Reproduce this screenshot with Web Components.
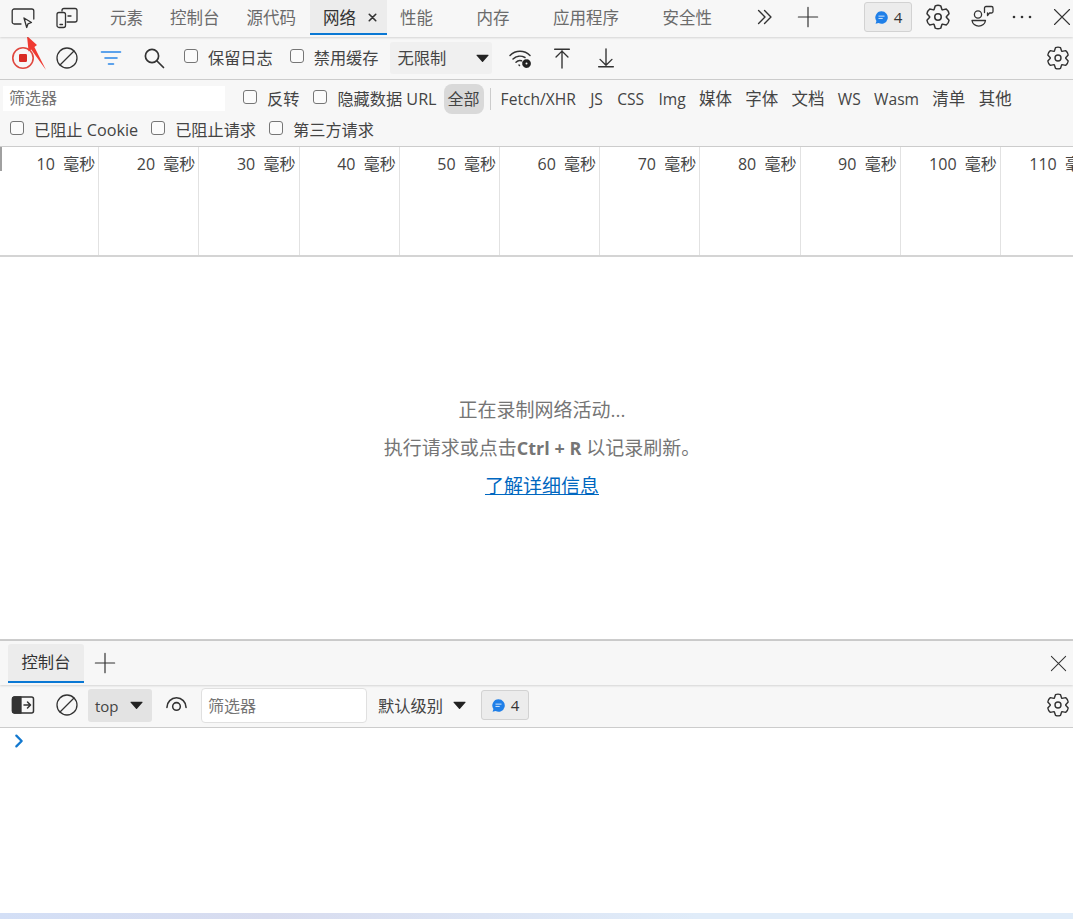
<!DOCTYPE html>
<html lang="zh-CN">
<head>
<meta charset="UTF-8">
<title>DevTools 网络</title>
<style>
  html, body { margin: 0; height: 100%; background: #fff; overflow: hidden; }
  body { font: 16px/20px "Open Sans", "Noto Sans CJK SC", sans-serif; color: #444; }
</style>
</head>
<body>
<devtools-app>
  <main-tabbar>
    <dt-iconbtn slot="start" name="inspect"></dt-iconbtn>
    <dt-iconbtn slot="start" name="device"></dt-iconbtn>
    <dt-tab>元素</dt-tab>
    <dt-tab>控制台</dt-tab>
    <dt-tab>源代码</dt-tab>
    <dt-tab active closable>网络</dt-tab>
    <dt-tab spare>性能</dt-tab>
    <dt-tab spare>内存</dt-tab>
    <dt-tab spare>应用程序</dt-tab>
    <dt-tab spare>安全性</dt-tab>
  </main-tabbar>
  <net-toolbar></net-toolbar>
  <net-filters></net-filters>
  <net-timeline></net-timeline>
  <net-empty></net-empty>
  <drawer-panel></drawer-panel>
  <svg slot="over" width="30" height="40" viewBox="0 0 30 40" style="position:absolute;left:22px;top:32px;pointer-events:none">
    <path d="M5 4 15 13 12.4 15 24 38 9.2 17.6 6.6 19.4Z" fill="#f03a32"/>
  </svg>
</devtools-app>

<script>
  // gear outline with 6 lobes, shared by the three settings icons
  function gearPath() {
    let d = '';
    for (let k = 0; k < 6; k++) {
      const c = (-90 + 60 * k) * Math.PI / 180;
      const pt = (r, a) => (12 + r * Math.cos(c + a)).toFixed(2) + ' ' + (12 + r * Math.sin(c + a)).toFixed(2);
      d += (k ? 'L' : 'M') + pt(7.7, -0.5) + 'L' + pt(10.6, -0.24) + 'Q' + pt(11.4, 0) + ' ' + pt(10.6, 0.24) + 'L' + pt(7.7, 0.5);
    }
    return d + 'Z';
  }

  const ICONS = {
    inspect: '<path d="M10 19H3.2a2 2 0 0 1-2-2V6a2 2 0 0 1 2-2h17.6a2 2 0 0 1 2 2v8"/><path d="M13 13l7.500 4.500-3.500 1.300-1.300 3.700z"/>',
    device: '<path d="M7 6V5.500a2 2 0 0 1 2-2h11a2 2 0 0 1 2 2v9.500a2 2 0 0 1-2 2h-8"/><rect x="2" y="7.500" width="8.500" height="15" rx="2"/><path d="M5 19.500h2.500M13 11h3"/>',
    clear: '<circle cx="12" cy="12" r="10"/><path d="M5 19 19 5"/>',
    record: '<circle cx="12" cy="12" r="10.2" stroke="#e0473e" stroke-width="1.6"/><rect x="8" y="8" width="8" height="8" rx="1.2" fill="#d92c25" stroke="none"/>',
    filter: '<path d="M2.5 6h19M6 12h12M9.5 18h5" stroke="#2a86e8" stroke-width="1.6"/>',
    search: '<circle cx="10" cy="10" r="6.6" stroke-width="1.7"/><path d="M15 15l6.5 6.5" stroke-width="1.7"/>',
    wifi: '<path d="M2 9.500a14 14 0 0 1 20 0M5 13a10 10 0 0 1 12-1.500M8 16.300a5.500 5.500 0 0 1 5.500-1.500M11 19l.5.500" stroke-width="1.500"/><circle cx="18.500" cy="17.500" r="3.400" fill="#222" stroke="#222" stroke-dasharray="1.600 1.100" stroke-width="2"/><circle cx="18.500" cy="17.500" r="1" fill="#f7f7f7" stroke="none"/>',
    up: '<path d="M4 2.500h16M12 23V4M5.500 11 12 4.500 18.500 11" stroke-width="1.500"/>',
    down: '<path d="M4 21.500h16M12 2v18M5.500 13.500 12 20l6.500-6.500" stroke-width="1.500"/>',
    chevrons: '<path d="M5 5l7 7-7 7M11.500 5l7 7-7 7" stroke-width="1.500"/>',
    plus: '<path d="M12 1.500v21M1.500 12h21" stroke-width="1.300"/>',
    gear: '<path d="' + gearPath() + '" stroke-width="1.400" stroke-linejoin="round"/><circle cx="12" cy="12" r="3" stroke-width="1.400"/>',
    people: '<circle cx="8" cy="9.500" r="3.600"/><path d="M2 15.500h13.500a6.800 6.500 0 0 1-13.500 0z"/><path d="M14.500 7.500V3A1.500 1.500 0 0 1 16 1.500h5.500A1.500 1.500 0 0 1 23 3v3.500A1.500 1.500 0 0 1 21.500 8h-2l-2 2.500V8"/>',
    dots: '<circle cx="4" cy="12" r="1.300" fill="#333" stroke="none"/><circle cx="12" cy="12" r="1.300" fill="#333" stroke="none"/><circle cx="20" cy="12" r="1.300" fill="#333" stroke="none"/>',
    close: '<path d="M3 3l18 18M21 3 3 21" stroke-width="1.300"/>',
    tabclose: '<path d="M6 6l12 12M18 6 6 18" stroke-width="3"/>',
    dock: '<rect x="1.500" y="4" width="21" height="16" rx="2" stroke-width="1.500"/><path d="M1.500 6a2 2 0 0 1 2-2H10v16H3.500a2 2 0 0 1-2-2z" fill="#333"/><path d="M13 12h6M16.500 9l3 3-3 3" stroke-width="1.500"/>',
    eye: '<path d="M2 14a10 10 0 0 1 20 0" stroke-width="1.600"/><circle cx="12" cy="13" r="4" stroke-width="1.600"/>',
    caret: '<path d="M3 6h18a.800.800 0 0 1 .600 1.300l-8.800 10a1 1 0 0 1-1.500 0l-8.800-10A.800.800 0 0 1 3 6z" fill="#222" stroke="none"/>',
    prompt: '<path d="M8 4l8 8-8 8" stroke="#1278cf" stroke-width="3.400"/>',
    chat: '<path d="M12 2a10 10 0 1 1-4.700 18.800L2.500 22l1.400-4.300A10 10 0 0 1 12 2z" fill="#1f7fe8" stroke="none"/><path d="M7.800 9.800h8.400M7.800 13.500h5.500" stroke="#cfe4fb" stroke-width="1.600"/>'
  };

  class DtIcon extends HTMLElement {
    connectedCallback() {
      const size = this.getAttribute('size') || 24;
      this.attachShadow({ mode: 'open' }).innerHTML = `
        <style>
          :host { display: inline-flex; flex: none; width: ${size}px; height: ${size}px; }
          svg { display: block; width: 100%; height: 100%; fill: none; stroke: #333; stroke-width: 1.3; stroke-linecap: round; stroke-linejoin: round; }
        </style>
        <svg viewBox="0 0 24 24">${ICONS[this.getAttribute('name')] || ''}</svg>`;
    }
  }
  customElements.define('dt-icon', DtIcon);

  class DtIconBtn extends HTMLElement {
    connectedCallback() {
      const size = this.getAttribute('size') || 24;
      const w = this.getAttribute('w') || 44;
      this.attachShadow({ mode: 'open' }).innerHTML = `
        <style>
          :host { display: inline-flex; flex: none; width: ${w}px; height: 100%; align-items: center; justify-content: center; }
        </style>
        <dt-icon name="${this.getAttribute('name')}" size="${size}"></dt-icon>`;
    }
  }
  customElements.define('dt-iconbtn', DtIconBtn);

  class DtTab extends HTMLElement {
    connectedCallback() {
      const closable = this.hasAttribute('closable');
      this.attachShadow({ mode: 'open' }).innerHTML = `
        <style>
          :host { display: inline-flex; flex: none; align-items: center; height: 35px; padding: 0 13.5px; box-sizing: border-box; color: #6b6b6b; font-size: 16.5px; white-space: nowrap; position: relative; }
          :host([spare]) { padding-right: 30px; padding-left: 13.5px; }
          :host([active]) { background: #ececec; color: #333; padding-right: 7px; width: 77px; }
          :host([active])::after { content: ""; position: absolute; left: 0; right: 0; bottom: 0; height: 2px; background: #0a78d4; }
          dt-icon { margin-left: 10px; }
        </style>
        <slot></slot>${closable ? '<dt-icon name="tabclose" size="13"></dt-icon>' : ''}`;
    }
  }
  customElements.define('dt-tab', DtTab);

  class DtCheck extends HTMLElement {
    connectedCallback() {
      this.attachShadow({ mode: 'open' }).innerHTML = `
        <style>
          :host { display: inline-flex; flex: none; align-items: center; white-space: nowrap; color: #444; font-size: 16.2px; }
          i { display: block; width: 12px; height: 12px; margin-right: 10px; border: 1.5px solid #767676; border-radius: 3px; background: #fbfbfb; position: relative; top: -2px; }
        </style>
        <i></i><slot></slot>`;
    }
  }
  customElements.define('dt-check', DtCheck);

  class DtBadge extends HTMLElement {
    connectedCallback() {
      this.attachShadow({ mode: 'open' }).innerHTML = `
        <style>
          :host { display: inline-flex; flex: none; align-items: center; justify-content: center; gap: 5px; width: 48px; height: 30px; box-sizing: border-box; background: #ececec; border: 1px solid #d2d2d2; border-radius: 3px; color: #333; font-size: 15px; }
        </style>
        <dt-icon name="chat" size="15"></dt-icon><slot></slot>`;
    }
  }
  customElements.define('dt-badge', DtBadge);

  class DtSelect extends HTMLElement {
    connectedCallback() {
      const gap = this.getAttribute('caret-gap') || 10;
      const drop = this.getAttribute('text-drop') || 0;
      this.attachShadow({ mode: 'open' }).innerHTML = `
        <style>
          :host { display: inline-flex; flex: none; align-items: center; height: 32px; box-sizing: border-box; padding: ${drop * 2}px 2px 0 8px; border-radius: 3px; background: var(--select-bg, #f0f0f0); color: #444; white-space: nowrap; }
          dt-icon { margin-left: ${gap}px; margin-top: ${-drop * 2}px; }
        </style>
        <slot></slot><dt-icon name="caret" size="15"></dt-icon>`;
    }
  }
  customElements.define('dt-select', DtSelect);

  class MainTabbar extends HTMLElement {
    constructor() {
      super();
      this.attachShadow({ mode: 'open' }).innerHTML = `
        <style>
          :host { display: flex; flex: none; align-items: center; height: 37px; box-sizing: border-box; padding: 0 0 3px 1px; background: #f7f7f7; box-shadow: 0 1px 2px rgba(0,0,0,.14); position: relative; z-index: 1; }
          .tabs { display: flex; margin-left: 7.5px; align-self: flex-start; }
          /* the close button hangs past the window edge so its X lands at 1062 */
          .end { display: flex; align-items: center; height: 34px; position: absolute; right: -10px; top: 0; }
        </style>
        <slot name="start"></slot>
        <div class="tabs"><slot></slot></div>
        <div class="end">
          <dt-iconbtn name="chevrons" size="22" w="43"></dt-iconbtn>
          <dt-iconbtn name="plus" size="22" w="44"></dt-iconbtn>
          <span style="width:34px"></span>
          <dt-badge style="margin-right:3px">4</dt-badge>
          <dt-iconbtn name="gear" size="26" w="46"></dt-iconbtn>
          <dt-iconbtn name="people" size="24" w="42"></dt-iconbtn>
          <dt-iconbtn name="dots" size="24" w="38"></dt-iconbtn>
          <dt-iconbtn name="close" size="20" w="42"></dt-iconbtn>
        </div>`;
    }
  }
  customElements.define('main-tabbar', MainTabbar);

  class NetToolbar extends HTMLElement {
    constructor() {
      super();
      this.attachShadow({ mode: 'open' }).innerHTML = `
        <style>
          :host { display: flex; flex: none; align-items: center; height: 43px; box-sizing: border-box; padding-left: 1px; background: #f7f7f7; border-bottom: 1px solid #ccc; }
          dt-select { width: 102px; margin-left: 11px; justify-content: space-between; font-size: 16.3px; }
          .gear { margin-left: auto; margin-right: -7px; }
          .l { margin-left: 9px; }
          .m { margin-left: 17px; }
        </style>
        <dt-iconbtn name="record" size="24"></dt-iconbtn>
        <dt-iconbtn name="clear"></dt-iconbtn>
        <dt-iconbtn name="filter" w="43"></dt-iconbtn>
        <dt-iconbtn name="search" w="43"></dt-iconbtn>
        <dt-check class="l">保留日志</dt-check>
        <dt-check class="m">禁用缓存</dt-check>
        <dt-select>无限制</dt-select>
        <dt-iconbtn name="wifi" size="24" w="56"></dt-iconbtn>
        <dt-iconbtn name="up" size="22" w="28"></dt-iconbtn>
        <dt-iconbtn name="down" size="22" w="60"></dt-iconbtn>
        <dt-iconbtn class="gear" name="gear" size="24" w="44"></dt-iconbtn>`;
    }
  }
  customElements.define('net-toolbar', NetToolbar);

  class NetFilters extends HTMLElement {
    constructor() {
      super();
      this.attachShadow({ mode: 'open' }).innerHTML = `
        <style>
          :host { display: block; flex: none; height: 67px; box-sizing: border-box; background: #f7f7f7; border-bottom: 1px solid #ccc; }
          .row { display: flex; align-items: center; }
          .one { padding: 1px 0 0 3px; height: 36px; box-sizing: border-box; }
          .two { padding-left: 10px; height: 28px; gap: 13px; }
          .input { width: 222px; height: 25px; padding-left: 6px; box-sizing: border-box; background: #fff; color: #757575; line-height: 25px; margin-right: 18px; }
          .chip { height: 30px; width: 40px; text-align: center; line-height: 30px; background: #d9d9d9; border-radius: 8px; margin-left: 7px; color: #444; }
          .sep { width: 1px; height: 22px; background: #ccc; margin: 0 10px 0 6px; }
          .types { display: flex; gap: 13.3px; white-space: nowrap; font-size: 16.5px; }
          .lat { font-size: 15.6px; }
          .lat.wide { margin-left: 1px; }
        </style>
        <div class="row one">
          <div class="input">筛选器</div>
          <dt-check>反转</dt-check>
          <dt-check style="margin-left:14px">隐藏数据 URL</dt-check>
          <div class="chip">全部</div>
          <div class="sep"></div>
          <div class="types">
            <span class="lat">Fetch/XHR</span><span class="lat wide">JS</span><span class="lat wide">CSS</span><span class="lat wide">Img</span><span>媒体</span><span>字体</span><span>文档</span><span class="lat">WS</span><span class="lat">Wasm</span><span>清单</span><span>其他</span>
          </div>
        </div>
        <div class="row two">
          <dt-check>已阻止 Cookie</dt-check>
          <dt-check>已阻止请求</dt-check>
          <dt-check>第三方请求</dt-check>
        </div>`;
    }
  }
  customElements.define('net-filters', NetFilters);

  class NetTimeline extends HTMLElement {
    constructor() {
      super();
      let cols = '';
      for (let i = 1; i <= 11; i++) cols += `<div class="col"><span>${i * 10}  毫秒</span></div>`;
      this.attachShadow({ mode: 'open' }).innerHTML = `
        <style>
          :host { display: grid; flex: none; grid-template-columns: 99.2px repeat(10, 100.2px); height: 110px; box-sizing: border-box; border-bottom: 2px solid #d4d4d4; overflow: hidden; position: relative; }
          :host::before { content: ""; position: absolute; left: 0; top: 0; width: 2px; height: 24px; background: #a0a0a0; }
          .col { border-right: 1px solid #e2e2e2; box-sizing: border-box; text-align: right; padding: 7px 3px 0 0; white-space: pre; color: #444; line-height: 20px; }
        </style>
        ${cols}`;
    }
  }
  customElements.define('net-timeline', NetTimeline);

  class NetEmpty extends HTMLElement {
    constructor() {
      super();
      this.attachShadow({ mode: 'open' }).innerHTML = `
        <style>
          :host { display: flex; flex: 1; flex-direction: column; align-items: center; justify-content: center; font-size: 19px; line-height: 37.500px; color: #757575; padding: 2px 0 0 11px; box-sizing: border-box; }
          b { font-weight: 700; font-size: 18px; }
          a { color: #0067c0; text-decoration: underline; margin-top: 1px; }
        </style>
        <div>正在录制网络活动...</div>
        <div>执行请求或点击<b>Ctrl + R</b> 以记录刷新。</div>
        <a href="#">了解详细信息</a>`;
    }
  }
  customElements.define('net-empty', NetEmpty);

  class DrawerPanel extends HTMLElement {
    constructor() {
      super();
      this.attachShadow({ mode: 'open' }).innerHTML = `
        <style>
          :host { display: block; flex: none; height: 274px; box-sizing: border-box; border-top: 2px solid #ccc; }
          .tabs { display: flex; align-items: flex-end; height: 44px; box-sizing: border-box; padding-left: 8px; background: #f7f7f7; box-shadow: 0 1px 2px rgba(0,0,0,.14); position: relative; }
          .tab { width: 76px; height: 39px; margin-bottom: 2px; box-sizing: border-box; background: #ececec; border-bottom: 2px solid #0a78d4; text-align: center; line-height: 37px; color: #333; font-size: 16.3px; border-radius: 3px 3px 0 0; }
          .tabs dt-iconbtn { height: 40px; margin-bottom: 2px; }
          .tabs .x { margin-left: auto; margin-right: -7px; height: 44px; margin-bottom: 0; }
          .bar { display: flex; align-items: center; height: 43px; box-sizing: border-box; padding: 0 0 2px 1px; background: #f7f7f7; border-bottom: 1px solid #ccc; }
          dt-select { --select-bg: #e3e3e3; width: 64px; height: 33px; padding-left: 7px; margin-left: -1px; }
          .input { width: 166px; height: 35px; margin-left: 1px; padding: 2px 0 0 6px; box-sizing: border-box; background: #fff; border: 1px solid #e0e0e0; border-radius: 4px; color: #757575; line-height: 31px; font-size: 16px; }
          .level { --select-bg: transparent; width: auto; margin-left: 4px; padding-left: 7px; height: 32px; font-size: 16.3px; }
          dt-badge { margin-left: 12px; }
          .gear { margin-left: auto; margin-right: -7px; }
          .top { font-size: 15px; }
          .out { height: 185px; padding: 5px 0 0 11px; box-sizing: border-box; }
        </style>
        <div class="tabs">
          <div class="tab">控制台</div>
          <dt-iconbtn name="plus" size="22" w="42"></dt-iconbtn>
          <dt-iconbtn class="x" name="close" size="19" w="44"></dt-iconbtn>
        </div>
        <div class="bar">
          <dt-iconbtn name="dock"></dt-iconbtn>
          <dt-iconbtn name="clear"></dt-iconbtn>
          <dt-select caret-gap="10" text-drop="1" class="top">top</dt-select>
          <dt-iconbtn name="eye" size="23" w="48"></dt-iconbtn>
          <div class="input">筛选器</div>
          <dt-select class="level" caret-gap="9" text-drop="1">默认级别</dt-select>
          <dt-badge>4</dt-badge>
          <dt-iconbtn class="gear" name="gear" size="24" w="44"></dt-iconbtn>
        </div>
        <div class="out"><dt-icon name="prompt" size="16"></dt-icon></div>`;
    }
  }
  customElements.define('drawer-panel', DrawerPanel);

  class DevtoolsApp extends HTMLElement {
    constructor() {
      super();
      this.attachShadow({ mode: 'open' }).innerHTML = `
        <style>
          :host { display: flex; flex-direction: column; width: 1073px; height: 919px; overflow: hidden; position: relative; background: #fff; }
          .strip { flex: none; height: 6px; background: linear-gradient(90deg, #d3dff6 0%, #d8dcef 25%, #e0ecf9 65%, #e0ecf9 100%); }
        </style>
        <slot></slot>
        <slot name="over"></slot>
        <div class="strip"></div>`;
    }
  }
  customElements.define('devtools-app', DevtoolsApp);
</script>
</body>
</html>
